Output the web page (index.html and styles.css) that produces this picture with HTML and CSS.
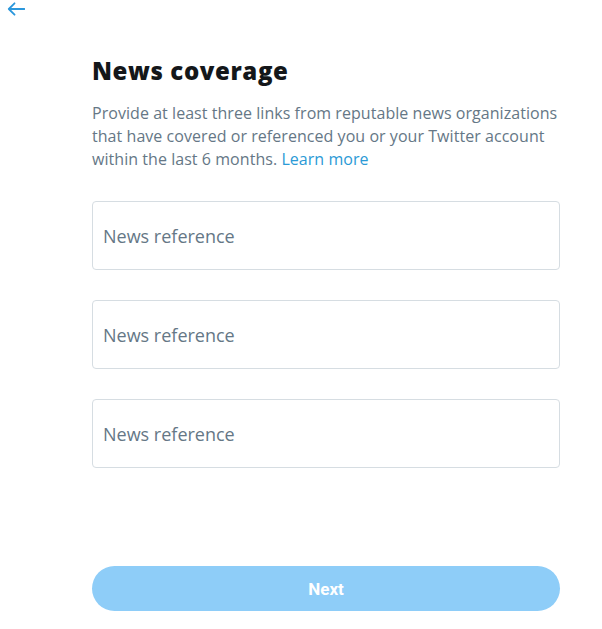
FILE: index.html
```html
<!DOCTYPE html>
<html lang="en">
<head>
<meta charset="utf-8">
<title>News coverage</title>
<link rel="stylesheet" href="styles.css">
</head>
<body>
<div class="page">
  <header class="topbar">
    <button class="back" aria-label="Back">
      <svg viewBox="0 0 18 14" width="18" height="14"><path d="M17.5 7H2 M7.5 1.3 L1.8 7 L7.5 12.7" fill="none" stroke="currentColor" stroke-width="1.8" stroke-linecap="round" stroke-linejoin="round"/></svg>
    </button>
  </header>
  <main class="content">
    <h1 class="title">News coverage</h1>
    <p class="desc">Provide at least three links from reputable news organizations that have covered or referenced you or your Twitter account within the last 6 months. <a href="#" class="link">Learn more</a></p>
    <div class="fields">
      <input class="field" type="text" placeholder="News reference">
      <input class="field" type="text" placeholder="News reference">
      <input class="field" type="text" placeholder="News reference">
    </div>
    <button class="next" disabled>Next</button>
  </main>
</div>
</body>
</html>
```
FILE: styles.css
```css
* { box-sizing: border-box; }
html, body { margin: 0; padding: 0; background: #fff; }
body { font-family: "Open Sans", "Noto Sans", sans-serif; color: #14171a; }
.page { width: 602px; height: 629px; display: flex; flex-direction: column; }
.topbar { height: 30px; padding: 2px 0 0 7px; }
.back { border: 0; background: none; padding: 0; margin: 0; color: #2b97dc; display: block; height: 14px; }
.back svg { display: block; }
.content { padding: 26px 42px 0 92px; display: flex; flex-direction: column; }
.title { font-size: 24px; font-weight: 800; margin: 0; line-height: 30px; letter-spacing: 0.6px; color: #14171a; }
.desc { margin: 16px -2px 0 0; font-size: 16px; line-height: 23px; color: #657786; letter-spacing: 0.05px; }
.link { color: #2b9ad6; text-decoration: none; }
.fields { display: flex; flex-direction: column; gap: 30px; margin-top: 30px; }
.field { width: 468px; height: 69px; border: 1px solid #d6dde2; border-radius: 4px; padding: 0 10px; font: inherit; font-size: 18px; color: #14171a; outline: none; }
.field::placeholder { color: #657786; opacity: 1; }
.next { margin-top: 98px; width: 468px; height: 45px; border: 0; border-radius: 23px; background: #8ecdf8; color: #fff; font-family: Roboto, "Open Sans", sans-serif; font-weight: 700; font-size: 17px; }
```
